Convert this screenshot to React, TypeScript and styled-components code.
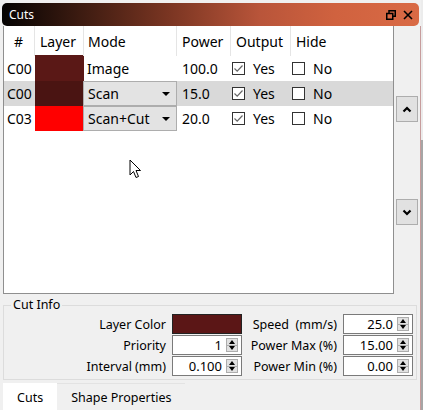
import React from 'react';
import styled, { createGlobalStyle } from 'styled-components';

const Global = createGlobalStyle`
  html, body { margin: 0; padding: 0; background: #f0f0f0; }
  body { font-family: "Noto Sans", "Open Sans", sans-serif; color: #000; }
  * { box-sizing: border-box; }
`;

const Window = styled.div`
  position: relative;
  width: 423px;
  height: 410px;
  overflow: hidden;
  display: flex;
  background: #f0f0f0;
`;

const Main = styled.div`
  width: 421px;
  display: flex;
  flex-direction: column;
`;

const RightStrip = styled.div`
  width: 2px;
  background: linear-gradient(#ececec 0 140px, #a6a6a6 140px 100%);
`;

const TitleBar = styled.div`
  margin: 3px 2px 0 2px;
  height: 24px;
  border-radius: 5px;
  background: linear-gradient(to right, #050302 0%, #3a1a10 18%, #7a3522 40%, #b9553a 62%, #d0623f 80%, #d96a45 100%);
  display: flex;
  align-items: center;
  padding: 0 6px 0 7px;
  color: #fff;
  font-size: 12px;
`;

const TitleText = styled.span`
  flex: 1;
`;

const TitleIcons = styled.div`
  display: flex;
  gap: 7px;
  align-items: center;
`;

const Body = styled.div`
  flex: 1;
  display: flex;
  flex-direction: column;
  border-right: 1px solid #c79c9c;
`;

const ContentRow = styled.div`
  display: flex;
  height: 268px;
`;

const TableBox = styled.div`
  margin-left: 3px;
  width: 391px;
  background: #fff;
  border: 1px solid #8f8f8f;
  border-top: none;
`;

const cols = '31px 49px 93px 54px 60px 1fr';

const HeaderRow = styled.div`
  display: grid;
  grid-template-columns: ${cols};
  height: 30px;
  font-size: 14px;
`;

const HeaderCell = styled.div<{ $active?: boolean; $pad?: number; $last?: boolean }>`
  position: relative;
  display: flex;
  align-items: center;
  padding-left: ${p => p.$pad ?? 5}px;
  border-right: ${p => (p.$last ? 'none' : '1px solid #e5e5e5')};
  ${p => p.$active ? `&::after { content: ''; position: absolute; left: 0; right: 0; bottom: -1px; height: 2px; background: #5a1816; }` : ''}
`;

const Row = styled.div<{ $selected?: boolean }>`
  display: grid;
  grid-template-columns: ${cols};
  height: 25px;
  font-size: 14px;
  background: ${p => (p.$selected ? '#d9d9d9' : 'transparent')};
`;

const Cell = styled.div<{ $pad?: number }>`
  display: flex;
  align-items: center;
  padding-left: ${p => p.$pad ?? 5}px;
  white-space: nowrap;
`;

const Swatch = styled.div<{ $color: string }>`
  background: ${p => p.$color};
`;

const Combo = styled.div`
  display: flex;
  align-items: center;
  justify-content: space-between;
  margin-left: -1px;
  padding: 0 6px 0 4px;
  background: #e3e3e3;
  border: 1px solid #adadad;
`;

const Arrow = styled.span`
  width: 0;
  height: 0;
  border-left: 4px solid transparent;
  border-right: 4px solid transparent;
  border-top: 4px solid #000;
`;

const Box = styled.span`
  width: 13px;
  height: 13px;
  border: 1px solid #333;
  background: #fff;
  margin-right: 8px;
  display: inline-flex;
  align-items: center;
  justify-content: center;
`;

const Side = styled.div`
  flex: 1;
  display: flex;
  flex-direction: column;
  padding: 70px 0 0 2px;
  gap: 77px;
`;

const SideButton = styled.div`
  width: 22px;
  height: 26px;
  background: #e1e1e1;
  border: 1px solid #adadad;
  display: flex;
  align-items: center;
  justify-content: center;
`;

const Group = styled.fieldset`
  margin: 3px 0 0 3px;
  width: 414px;
  height: 83px;
  padding: 0;
  border: 1px solid #dcdcdc;
  font-size: 12.5px;
`;

const Legend = styled.legend`
  margin-left: 7px;
  padding: 0 2px;
  font-size: 12.5px;
  line-height: 16px;
`;

const FormGrid = styled.div`
  display: grid;
  grid-template-columns: 162px 70px 89px 70px;
  column-gap: 6px;
  row-gap: 1px;
  grid-auto-rows: 20px;
  margin-top: 1px;
`;

const Label = styled.div`
  display: flex;
  align-items: center;
  justify-content: flex-end;
  white-space: pre;
`;

const ColorField = styled.div`
  background: #5b1616;
  border: 1px solid #222;
`;

const Spin = styled.div`
  display: flex;
  align-items: center;
  background: #fff;
  border: 1px solid #7a7a7a;
  padding: 0 3px 0 2px;
`;

const SpinValue = styled.span`
  flex: 1;
  text-align: right;
  padding-right: 4px;
  font-size: 13px;
`;

const SpinButtons = styled.div`
  display: flex;
  flex-direction: column;
  width: 12px;
  height: 14px;
  border: 1px solid #adadad;
  background: #e1e1e1;
`;

const SpinBtn = styled.div<{ $down?: boolean }>`
  flex: 1;
  display: flex;
  align-items: center;
  justify-content: center;
  ${p => (p.$down ? 'border-top: 1px solid #adadad;' : '')}
  &::before {
    content: '';
    width: 0;
    height: 0;
    border-left: 3.5px solid transparent;
    border-right: 3.5px solid transparent;
    ${p => (p.$down ? 'border-top: 4px solid #000;' : 'border-bottom: 4px solid #000;')}
  }
`;

const Tabs = styled.div`
  display: flex;
  margin: 3px 0 0 3px;
  height: 27px;
  font-size: 12.5px;
`;

const Tab = styled.div<{ $active?: boolean }>`
  display: flex;
  align-items: center;
  padding: 0 14px;
  background: ${p => (p.$active ? '#fff' : '#f0f0f0')};
  border-top: 1px solid ${p => (p.$active ? '#fff' : '#e3e3e3')};
`;

const Cursor = styled.svg`
  position: absolute;
  left: 129px;
  top: 159px;
`;

const CheckBox = ({ checked }: { checked?: boolean }) => (
  <Box>
    {checked && (
      <svg width="11" height="11" viewBox="0 0 11 11">
        <polyline points="1.5,5.5 4.2,8.2 9.5,2.5" fill="none" stroke="#666" strokeWidth="1.2" />
      </svg>
    )}
  </Box>
);

const SpinBox = ({ value }: { value: string }) => (
  <Spin>
    <SpinValue>{value}</SpinValue>
    <SpinButtons>
      <SpinBtn />
      <SpinBtn $down />
    </SpinButtons>
  </Spin>
);

const rows = [
  { id: 'C00', color: '#5a1816', mode: 'Image', combo: false, power: '100.0', selected: false },
  { id: 'C00', color: '#4a1412', mode: 'Scan', combo: true, power: '15.0', selected: true },
  { id: 'C03', color: '#ff0000', mode: 'Scan+Cut', combo: true, power: '20.0', selected: false },
];

export default function App() {
  return (
    <Window>
      <Global />
      <Main>
        <TitleBar>
          <TitleText>Cuts</TitleText>
          <TitleIcons>
            <svg width="10" height="10" viewBox="0 0 10 10">
              <rect x="3" y="0.75" width="6.25" height="5.5" fill="none" stroke="#000" strokeWidth="1.5" />
              <rect x="0.75" y="3.5" width="6" height="5.75" fill="#d96a45" stroke="#000" strokeWidth="1.5" />
            </svg>
            <svg width="10" height="10" viewBox="0 0 10 10">
              <path d="M1 1 L9 9 M9 1 L1 9" stroke="#000" strokeWidth="1.6" />
            </svg>
          </TitleIcons>
        </TitleBar>
        <Body>
          <ContentRow>
            <TableBox>
              <HeaderRow>
                <HeaderCell $pad={10}>#</HeaderCell>
                <HeaderCell $active>Layer</HeaderCell>
                <HeaderCell $pad={4}>Mode</HeaderCell>
                <HeaderCell>Power</HeaderCell>
                <HeaderCell>Output</HeaderCell>
                <HeaderCell $last>Hide</HeaderCell>
              </HeaderRow>
              {rows.map((r, i) => (
                <Row key={i} $selected={r.selected}>
                  <Cell $pad={3}>{r.id}</Cell>
                  <Swatch $color={r.color} />
                  {r.combo ? (
                    <Combo>
                      {r.mode}
                      <Arrow />
                    </Combo>
                  ) : (
                    <Cell $pad={3}>{r.mode}</Cell>
                  )}
                  <Cell $pad={5}>{r.power}</Cell>
                  <Cell $pad={1}>
                    <CheckBox checked />
                    Yes
                  </Cell>
                  <Cell $pad={1}>
                    <CheckBox />
                    No
                  </Cell>
                </Row>
              ))}
            </TableBox>
            <Side>
              <SideButton>
                <svg width="10" height="7" viewBox="0 0 10 7">
                  <path d="M1.5 5.5 L5 2 L8.5 5.5" fill="none" stroke="#000" strokeWidth="2.2" />
                </svg>
              </SideButton>
              <SideButton>
                <svg width="10" height="7" viewBox="0 0 10 7">
                  <path d="M1.5 1.5 L5 5 L8.5 1.5" fill="none" stroke="#000" strokeWidth="2.2" />
                </svg>
              </SideButton>
            </Side>
          </ContentRow>
          <Group>
            <Legend>Cut Info</Legend>
            <FormGrid>
              <Label>Layer Color</Label>
              <ColorField />
              <Label>{'Speed  (mm/s)'}</Label>
              <SpinBox value="25.0" />
              <Label>Priority</Label>
              <SpinBox value="1" />
              <Label>Power Max (%)</Label>
              <SpinBox value="15.00" />
              <Label>Interval (mm)</Label>
              <SpinBox value="0.100" />
              <Label>Power Min (%)</Label>
              <SpinBox value="0.00" />
            </FormGrid>
          </Group>
          <Tabs>
            <Tab $active>Cuts</Tab>
            <Tab>Shape Properties</Tab>
          </Tabs>
        </Body>
      </Main>
      <RightStrip />
      <Cursor width="13" height="21" viewBox="0 0 13 21">
        <path d="M1 1 L1 16 L4.5 12.5 L7 18.5 L9.5 17.5 L7 11.5 L11.5 11.5 Z" fill="#fff" stroke="#000" strokeWidth="1" strokeLinejoin="round" />
      </Cursor>
    </Window>
  );
}
